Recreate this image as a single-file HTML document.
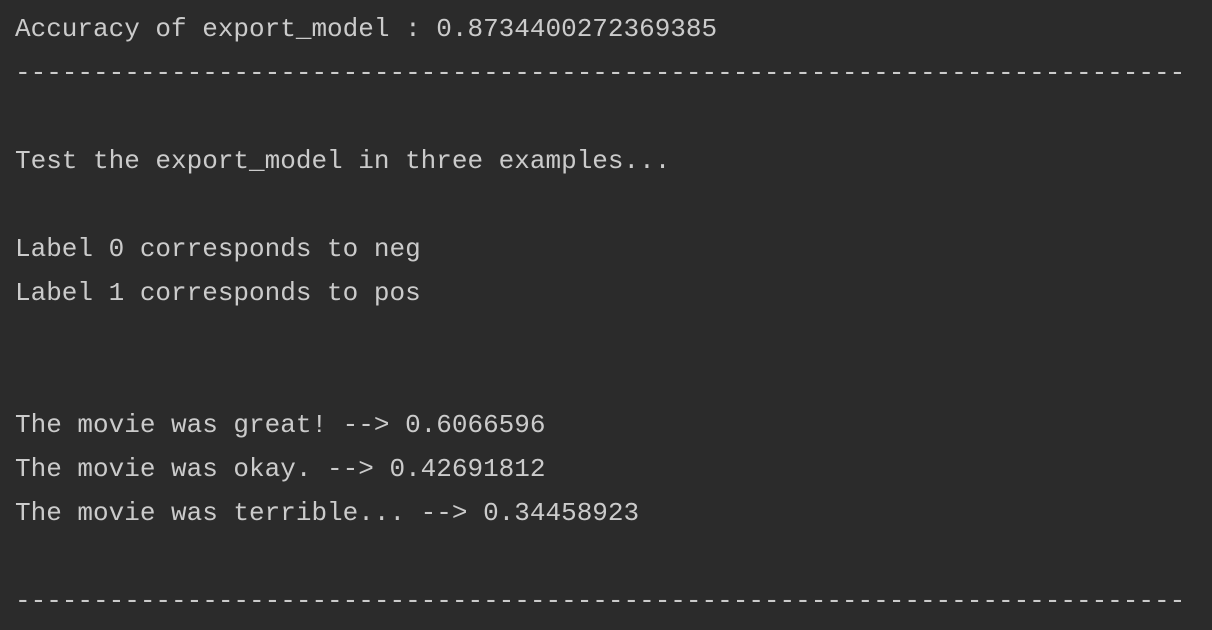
<!DOCTYPE html>
<html><head><style>
html,body{margin:0;padding:0;background:#2b2b2b;width:1212px;height:630px;overflow:hidden}
pre{margin:0;position:absolute;left:15px;top:7px;font-family:"Liberation Mono",monospace;font-size:26px;line-height:44px;color:#cbcbcb}
</style></head><body>
<pre>Accuracy of export_model : 0.8734400272369385
---------------------------------------------------------------------------

Test the export_model in three examples...

Label 0 corresponds to neg
Label 1 corresponds to pos


The movie was great! --&gt; 0.6066596
The movie was okay. --&gt; 0.42691812
The movie was terrible... --&gt; 0.34458923

---------------------------------------------------------------------------</pre>
</body></html>
